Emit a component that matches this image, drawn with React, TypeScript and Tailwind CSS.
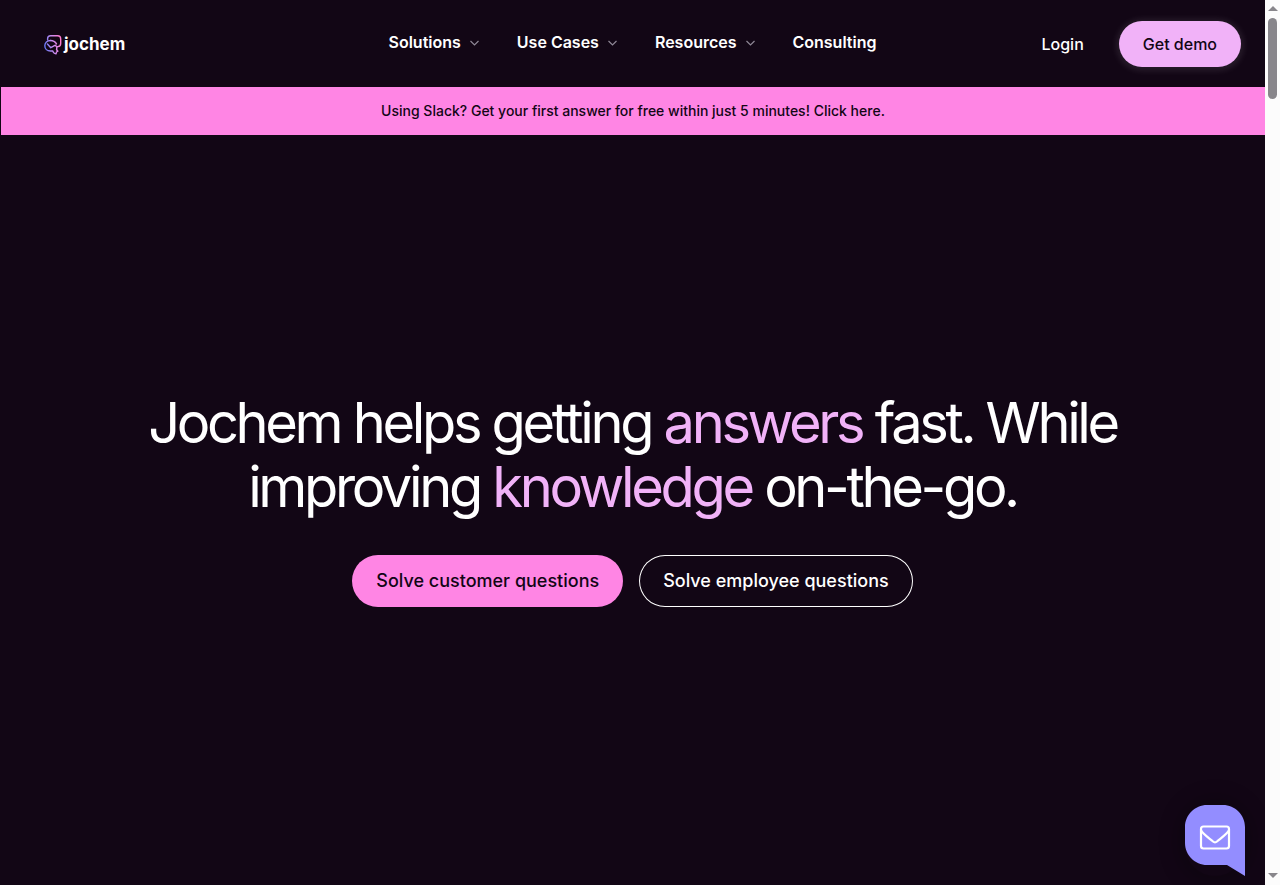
import React from 'react';

const NAV_ITEMS = [
  { label: 'Solutions', hasMenu: true },
  { label: 'Use Cases', hasMenu: true },
  { label: 'Resources', hasMenu: true },
  { label: 'Consulting', hasMenu: false },
];

function Logo() {
  return (
    <a href="#" aria-label="jochem" className="ml-5 flex items-center gap-0.5 text-white">
      <svg width="18" height="22" viewBox="0 0 18 22" fill="none" stroke="url(#logo-stroke)" strokeWidth="1.4" strokeLinejoin="round" strokeLinecap="round">
        <defs>
          <linearGradient id="logo-stroke" x1="0" y1="13" x2="17" y2="10" gradientUnits="userSpaceOnUse">
            <stop stopColor="#5f74f5" />
            <stop offset="0.5" stopColor="#c58cf0" />
            <stop offset="1" stopColor="#ff7ad0" />
          </linearGradient>
        </defs>
        <path d="M3.600 7V5.800c0-1.900 1.200-3 3-3h7c2 0 3.100 1.100 3.100 3.100v4.500c0 1.900-1 3-2.900 3.200l-1.200.2" />
        <path d="M6.500 7.500C3.200 7.500.8 9.800.8 12.800c0 3.100 2.300 5.200 5.600 5.200h2.400c.3 1.700 1.300 2.600 3.200 2.900l.6-2.100 1.300-.6-1.300-1.500" />
        <path d="M6.500 7.500c3 0 4.600 1.100 6 3.400" />
        <path d="M3.400 11l3.400 3.700 4.600-2.500 1.500 1.900-.3 2.400" />
      </svg>
      <span className="text-[17px] leading-6 font-bold">jochem</span>
    </a>
  );
}

function Header() {
  return (
    <header className="grid h-[87px] grid-cols-[1fr_auto_1fr] items-center px-6">
      <Logo />
      <nav className="flex items-center gap-9 pb-1">
        {NAV_ITEMS.map((item) => (
          <a key={item.label} href="#" className="flex items-center gap-2 text-base font-semibold text-white">
            {item.label}
            {item.hasMenu && (
              <svg width="12" height="12" viewBox="0 0 12 12" fill="none" stroke="#8e8795" strokeWidth="1.2">
                <path d="M1.500 5l4 4 4-4" />
              </svg>
            )}
          </a>
        ))}
      </nav>
      <div className="flex items-center justify-end gap-[35px] font-medium">
        <a href="#" className="text-base text-white">Login</a>
        <button type="button" className="h-[46px] rounded-full bg-[#f1b2f8] px-6 text-base text-[#120615] shadow-[0_1px_6px_3px_rgba(255,255,255,0.09)]">
          Get demo
        </button>
      </div>
    </header>
  );
}

function ChatButton() {
  return (
    <button type="button" aria-label="Open chat" className="absolute right-5 bottom-[9px] rounded-full shadow-[0_0_20px_6px_rgba(0,0,0,0.25)]">
      <svg width="60" height="71" viewBox="0 0 60 71" fill="none">
        <path d="M22 0h16c12 0 22 10 22 22v49L42 60H22C10 60 0 50 0 38V22C0 10 10 0 22 0z" fill="#938dff" />
        <rect x="16" y="21.500" width="28" height="22" rx="2.500" stroke="#fff" strokeWidth="2.200" />
        <path d="M16 25c.5 2.500 4 5 12 11.500 1.300 1.100 2.700 1.100 4 0C40 30 43.500 27.500 44 25" stroke="#fff" strokeWidth="2.200" />
      </svg>
    </button>
  );
}

function ScrollRail() {
  return (
    <div aria-hidden="true" className="flex w-[15px] shrink-0 flex-col items-center justify-between bg-[#fcfcfc] pt-1.5 pb-[7px]">
      <div className="flex flex-col items-center gap-[7px]">
        <svg width="10" height="5" viewBox="0 0 10 5" fill="#88868b"><path d="M5 0l5 5H0z" /></svg>
        <div className="h-[81px] w-[9px] rounded-full bg-[#88868b]" />
      </div>
      <svg width="10" height="5" viewBox="0 0 10 5" fill="#88868b"><path d="M0 0h10L5 5z" /></svg>
    </div>
  );
}

export default function App() {
  return (
    <div className="flex min-h-screen bg-[#120615] font-['Inter',sans-serif]">
      <div className="relative flex min-w-0 flex-1 flex-col overflow-hidden">
        <Header />
        <a href="#" className="ml-px flex h-12 items-center justify-center bg-[#ff85e4] text-sm font-medium text-[#120615]">
          Using Slack? Get your first answer for free within just 5 minutes! Click here.
        </a>
        <main className="flex flex-1 flex-col items-center justify-center gap-9 px-6 pb-[22px]">
          <h1 className="max-w-[1040px] text-center text-[56px] leading-16 tracking-[-0.06em] text-white">
            Jochem helps getting <span className="text-[#f1b2f8]">answers</span> fast. While improving{' '}
            <span className="text-[#f1b2f8]">knowledge</span> on-the-go.
          </h1>
          <div className="flex flex-wrap justify-center gap-4 text-lg font-medium">
            <button type="button" className="h-[52px] rounded-full bg-[#ff85e4] px-6 text-[#120615]">
              Solve customer questions
            </button>
            <button type="button" className="h-[52px] rounded-full px-6 text-white ring-1 ring-white ring-inset">
              Solve employee questions
            </button>
          </div>
        </main>
        <ChatButton />
      </div>
      <ScrollRail />
    </div>
  );
}
